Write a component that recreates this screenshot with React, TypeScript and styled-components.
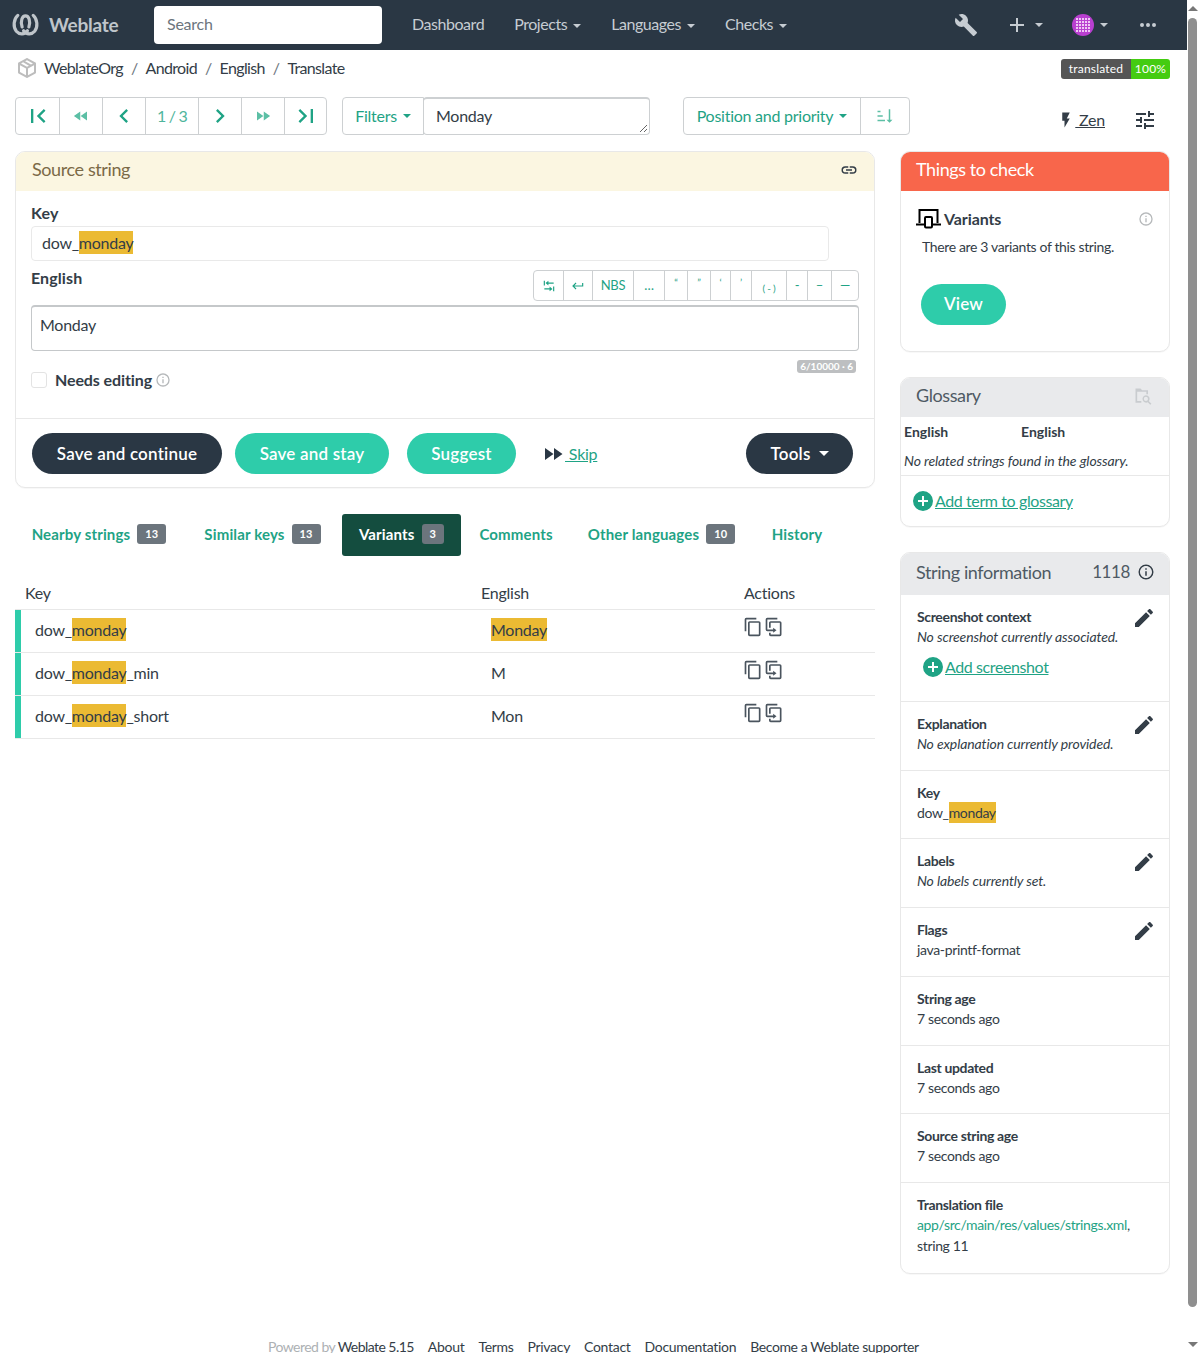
import React from 'react';
import styled, { createGlobalStyle } from 'styled-components';

const P = {
  first: 'M18.41,16.59L13.82,12L18.41,7.41L17,6L11,12L17,18L18.41,16.59M6,6H8V18H6V6Z',
  prev: 'M15.41,16.58L10.83,12L15.41,7.41L14,6L8,12L14,18L15.41,16.58Z',
  next: 'M8.59,16.58L13.17,12L8.59,7.41L10,6L16,12L10,18L8.59,16.58Z',
  last: 'M5.59,7.41L10.18,12L5.59,16.59L7,18L13,12L7,6L5.59,7.41M16,6H18V18H16V6Z',
  rewind: 'M11.5,12L20,18V6M11,18V6L2.5,12L11,18Z',
  forward: 'M13,6V18L21.5,12M4,18L12.5,12L4,6V18Z',
  wrench:
    'M22.7,19L13.6,9.9C14.5,7.6 14,4.9 12.1,3C10.1,1 7.1,0.6 4.7,1.7L9,6L6,9L1.6,4.7C0.4,7.1 0.9,10.1 2.9,12.1C4.8,14 7.5,14.5 9.8,13.6L18.9,22.7C19.3,23.1 19.9,23.1 20.3,22.7L22.6,20.4C23.1,20 23.1,19.3 22.7,19Z',
  plus: 'M19,13H13V19H11V13H5V11H11V5H13V11H19V13Z',
  dots: 'M16,12A2,2 0 0,1 18,10A2,2 0 0,1 20,12A2,2 0 0,1 18,14A2,2 0 0,1 16,12M10,12A2,2 0 0,1 12,10A2,2 0 0,1 14,12A2,2 0 0,1 12,14A2,2 0 0,1 10,12M4,12A2,2 0 0,1 6,10A2,2 0 0,1 8,12A2,2 0 0,1 6,14A2,2 0 0,1 4,12Z',
  flash: 'M7,2V13H10V22L17,10H13L17,2H7Z',
  tune: 'M3,17V19H9V17H3M3,5V7H13V5H3M13,21V19H21V17H13V15H11V21H13M7,9V11H3V13H7V15H9V9H7M21,13V11H11V13H21M15,9H17V7H21V5H17V3H15V9Z',
  sort: 'M19 17H22L18 21L14 17H17V3H19M2 17H12V19H2M6 5V7H2V5M2 11H9V13H2V11Z',
  link: 'M3.9,12C3.9,10.29 5.29,8.9 7,8.9H11V7H7A5,5 0 0,0 2,12A5,5 0 0,0 7,17H11V15.1H7C5.29,15.1 3.9,13.71 3.9,12M8,13H16V11H8V13M17,7H13V8.9H17C18.71,8.9 20.1,10.29 20.1,12C20.1,13.71 18.71,15.1 17,15.1H13V17H17A5,5 0 0,0 22,12A5,5 0 0,0 17,7Z',
  info: 'M11,9H13V7H11M12,20C7.59,20 4,16.41 4,12C4,7.59 7.59,4 12,4C16.41,4 20,7.59 20,12C20,16.41 16.41,20 12,20M12,2A10,10 0 0,0 2,12A10,10 0 0,0 12,22A10,10 0 0,0 22,12A10,10 0 0,0 12,2M11,17H13V11H11V17Z',
  pencil:
    'M20.71,7.04C21.1,6.65 21.1,6 20.71,5.63L18.37,3.29C18,2.9 17.35,2.9 16.96,3.29L15.12,5.12L18.87,8.87M3,17.25V21H6.75L17.81,9.93L14.06,6.18L3,17.25Z',
  plusCircle:
    'M17,13H13V17H11V13H7V11H11V7H13V11H17M12,2A10,10 0 0,0 2,12A10,10 0 0,0 12,22A10,10 0 0,0 22,12A10,10 0 0,0 12,2Z',
  copy: 'M19,21H8V7H19M19,5H8A2,2 0 0,0 6,7V21A2,2 0 0,0 8,23H19A2,2 0 0,0 21,21V7A2,2 0 0,0 19,5M16,1H4A2,2 0 0,0 2,3V17H4V3H16V1Z',
  duplicate:
    'M11,17H4A2,2 0 0,1 2,15V3A2,2 0 0,1 4,1H16V3H4V15H11V13L15,16L11,19V17M19,21V7H8V13H6V7A2,2 0 0,1 8,5H19A2,2 0 0,1 21,7V21A2,2 0 0,1 19,23H8A2,2 0 0,1 6,21V19H8V21H19Z',
  ret: 'M19,7V11H5.83L9.41,7.41L8,6L2,12L8,18L9.41,16.58L5.83,13H21V7H19Z',
  pack: 'M21,16.5C21,16.88 20.79,17.21 20.47,17.38L12.57,21.82C12.41,21.94 12.21,22 12,22C11.79,22 11.59,21.94 11.43,21.82L3.53,17.38C3.21,17.21 3,16.88 3,16.5V7.5C3,7.12 3.21,6.79 3.53,6.62L11.43,2.18C11.59,2.06 11.79,2 12,2C12.21,2 12.41,2.06 12.57,2.18L20.47,6.62C20.79,6.79 21,7.12 21,7.5V16.5M12,4.15L10.11,5.22L16,8.61L17.96,7.5L12,4.15M6.04,7.5L12,10.85L13.96,9.75L8.08,6.35L6.04,7.5M5,15.91L11,19.29V12.58L5,9.21V15.91M19,15.91V9.21L13,12.58V19.29L19,15.91Z',
};

const Global = createGlobalStyle`
  body {
    margin: 0;
    font-family: Lato, "Noto Sans", sans-serif;
    font-size: 16px;
    line-height: 1.25;
    letter-spacing: -0.25px;
    color: #333d47;
    background: #fff;
  }
  * { box-sizing: border-box; }
`;

const Shell = styled.div`
  padding-right: 13px;
`;

/* the window scrollbar in the reference */
const ScrollBar = styled.div`
  position: fixed;
  top: 0;
  right: 0;
  bottom: 0;
  width: 13px;
  background: #fff;
  display: flex;
  flex-direction: column;
  align-items: flex-start;
`;
const ScrollUp = styled.span`
  width: 0;
  height: 0;
  margin: 6px 0 7px 1px;
  border-bottom: 5px solid #777;
  border-left: 5px solid transparent;
  border-right: 5px solid transparent;
`;
const ScrollThumb = styled.span`
  width: 9px;
  height: 1289px;
  margin-left: 1px;
  background: #8f8f8f;
  border-radius: 5px;
`;
const ScrollDown = styled.span`
  width: 0;
  height: 0;
  margin: auto 0 6px 1px;
  border-top: 5px solid #777;
  border-left: 5px solid transparent;
  border-right: 5px solid transparent;
`;

const Svg = styled.svg<{ $size: number }>`
  width: ${(p) => p.$size}px;
  height: ${(p) => p.$size}px;
  flex: none;
  fill: currentColor;
`;

const Icon = ({ d, size = 24 }: { d: string; size?: number }) => (
  <Svg $size={size} viewBox="0 0 24 24">
    <path d={d} />
  </Svg>
);

const Caret = styled.span`
  display: inline-block;
  width: 0;
  height: 0;
  margin-left: 6px;
  vertical-align: 2px;
  border-top: 4px solid currentColor;
  border-left: 4px solid transparent;
  border-right: 4px solid transparent;
`;

/* navbar */
const Nav = styled.nav`
  height: 50px;
  background: #2a3744;
  display: flex;
  align-items: center;
  color: #c6ccd2;
`;
const Brand = styled.div`
  width: 154px;
  padding-left: 12px;
  padding-bottom: 1px;
  display: flex;
  align-items: center;
  gap: 10px;
  font-size: 19px;
  font-weight: 700;
  color: #bfc5ca;
`;
const LogoSvg = styled.svg`
  width: 27px;
  height: 24px;
  fill: none;
  stroke: #bfc5ca;
  stroke-width: 3.3;
  stroke-linecap: round;
`;
const Search = styled.div`
  width: 228px;
  height: 38px;
  background: #fff;
  border-radius: 4px;
  padding: 0 13px 2px;
  display: flex;
  align-items: center;
  color: #6c757d;
`;
const NavLinks = styled.div`
  display: flex;
  gap: 30px;
  margin-left: 30px;
  padding-bottom: 2px;
  flex: 1;
  letter-spacing: -0.45px;
`;
const NavLink = styled.span``;
const NavIcons = styled.div`
  display: flex;
  align-items: center;
  margin-right: 27px;
`;
const NavIcon = styled.span<{ $w: number }>`
  width: ${(p) => p.$w}px;
  display: flex;
  align-items: center;
`;
const Avatar = styled.svg`
  width: 22px;
  height: 22px;
  flex: none;
`;

/* breadcrumbs */
const Crumbs = styled.div`
  height: 47px;
  padding: 0 17px 0 15px;
  display: flex;
  align-items: flex-start;
  justify-content: space-between;
`;
const CrumbTrail = styled.div`
  display: flex;
  align-items: center;
  height: 36px;
  color: #333d47;
  letter-spacing: -0.65px;
`;
const PackIcon = styled.span`
  color: #bdbdbd;
  display: flex;
  margin-right: 5px;
`;
const Sep = styled.span`
  margin: 0 8px;
  color: #6c757d;
`;
const Badge = styled.div`
  margin-top: 9px;
  height: 20px;
  display: flex;
  font-size: 12px;
  line-height: 20px;
  color: #fff;
  border-radius: 3px;
  overflow: hidden;
  letter-spacing: 0.2px;
`;
const BadgeL = styled.span`
  width: 70px;
  background: #555;
  text-align: center;
`;
const BadgeR = styled.span`
  width: 39px;
  background: #4c1;
  text-align: center;
`;

/* toolbar */
const Toolbar = styled.div`
  height: 38px;
  margin: 0 17px 16px 15px;
  display: flex;
  align-items: stretch;
  color: #1fa385;
`;
const Group = styled.div`
  display: flex;
  border: 1px solid #cdd0d2;
  border-radius: 4px;
  overflow: hidden;
`;
const GroupBtn = styled.div<{ $w: number; $light?: boolean }>`
  width: ${(p) => p.$w}px;
  display: flex;
  align-items: center;
  justify-content: center;
  color: ${(p) => (p.$light ? '#5cbfa5' : '#1fa385')};
  & + & {
    border-left: 1px solid #cdd0d2;
  }
`;
const PageCount = styled.span`
  letter-spacing: -0.8px;
  color: #4fb59c;
`;
const FilterBtn = styled.div`
  margin-left: 15px;
  width: 82px;
  border: 1px solid #cdd0d2;
  border-radius: 4px 0 0 4px;
  display: flex;
  align-items: center;
  justify-content: center;
`;
const FilterInput = styled.div`
  position: relative;
  width: 227px;
  margin-left: -1px;
  border: 1px solid #cdd0d2;
  border-top-width: 2px;
  border-radius: 4px;
  padding: 0 0 2px 12px;
  display: flex;
  align-items: center;
  color: #333d47;
`;
const Resizer = styled.svg`
  position: absolute;
  right: 1px;
  bottom: 1px;
  width: 9px;
  height: 9px;
  stroke: #666;
  stroke-width: 1;
`;
const SortGroup = styled(Group)`
  margin-left: 33px;
`;
const ZenWrap = styled.div`
  margin: 0 13px 0 auto;
  display: flex;
  align-items: center;
  padding-top: 8px;
  color: #333d47;
`;
const ZenLink = styled.span`
  text-decoration: underline;
  margin-right: 28px;
`;

/* main */
const Main = styled.div`
  display: grid;
  grid-template-columns: 860px 270px;
  column-gap: 25px;
  padding: 0 17px 0 15px;
  align-items: start;
`;
const Column = styled.div``;
const Card = styled.section<{ $gap?: number }>`
  border: 1px solid #e8e8e8;
  border-radius: 10px;
  overflow: hidden;
  background: #fff;
  margin-bottom: ${(p) => p.$gap ?? 0}px;
  box-shadow: 0 1px 1px rgba(0, 0, 0, 0.03);
`;
const CardHead = styled.header<{ $bg: string; $color: string; $h?: number; $pl?: number }>`
  height: ${(p) => p.$h ?? 40}px;
  margin: -1px -1px 0;
  padding: 0 17px 3px ${(p) => p.$pl ?? 16}px;
  background: ${(p) => p.$bg};
  color: ${(p) => p.$color};
  font-size: 18px;
  letter-spacing: -0.4px;
  display: flex;
  align-items: center;
  justify-content: space-between;
`;
const HeadRight = styled.span`
  display: flex;
  align-items: center;
  gap: 7px;
  margin-right: -2px;
  color: #4f5a64;
  font-size: 17px;
`;
const HeadIcon = styled.span<{ $color?: string }>`
  display: flex;
  color: ${(p) => p.$color ?? '#333d47'};
`;

const SourceBody = styled.div`
  padding: 14px 15px 0;
  height: 228px;
  border-bottom: 1px solid #e8e8e8;
`;
const Label = styled.div`
  font-weight: 700;
  font-size: 16px;
  line-height: 16px;
  letter-spacing: 0.1px;
  margin-bottom: 5px;
`;
const KeyBox = styled.div`
  width: 798px;
  height: 35px;
  border: 1px solid #e9e9e9;
  border-radius: 4px;
  padding: 0 10px 1px;
  display: flex;
  align-items: center;
`;
const Mark = styled.mark`
  background: #ebba33;
  color: inherit;
  padding: 2px 0;
`;
const EditorHead = styled.div`
  display: flex;
  justify-content: space-between;
  align-items: flex-start;
  margin-top: 9px;
`;
const EditGroup = styled(Group)`
  height: 31px;
  font-size: 13px;
`;
const EditBtn = styled(GroupBtn)`
  font-size: 13px;
`;
const SmallGlyph = styled.span<{ $up?: boolean }>`
  font-size: 10px;
  transform: translateY(${(p) => (p.$up ? -3 : 3)}px);
`;
const TextArea = styled.div`
  margin-top: 4px;
  height: 46px;
  border: 1px solid #c5c8ca;
  border-top-width: 2px;
  border-radius: 4px;
  padding: 8px;
`;
const CounterRow = styled.div`
  display: flex;
  justify-content: flex-end;
  margin: 9px 3px 0 0;
`;
const Counter = styled.span`
  background: #bdbfc1;
  color: #fff;
  font-size: 10px;
  font-weight: 700;
  line-height: 13px;
  letter-spacing: 0;
  padding: 0 3px;
  border-radius: 3px;
`;
const CheckRow = styled.div`
  display: flex;
  align-items: center;
  margin-top: -3px;
  height: 20px;
`;
const Check = styled.span`
  width: 16px;
  height: 16px;
  border: 1px solid #e3e3e3;
  border-radius: 3px;
  margin-right: 8px;
`;
const CheckLabel = styled.span`
  font-weight: 700;
  font-size: 16px;
  letter-spacing: -0.1px;
  margin-right: 3px;
`;
const GrayIcon = styled.span`
  display: flex;
  color: #b5b8ba;
`;
const Actions = styled.div`
  height: 68px;
  padding: 14px 21px 13px 16px;
  display: flex;
  align-items: flex-start;
`;
const Pill = styled.span<{ $bg: string; $w: number; $ml?: number }>`
  width: ${(p) => p.$w}px;
  height: 41px;
  margin-left: ${(p) => p.$ml ?? 0}px;
  border-radius: 21px;
  background: ${(p) => p.$bg};
  color: #fff;
  font-size: 17px;
  font-weight: 600;
  letter-spacing: 0.2px;
  display: flex;
  align-items: center;
  justify-content: center;
`;
const PillCaret = styled(Caret)`
  margin-left: 8px;
  vertical-align: 0;
  border-top-width: 5px;
  border-left-width: 5px;
  border-right-width: 5px;
`;
const Skip = styled.span`
  margin-left: 25px;
  height: 41px;
  display: flex;
  align-items: center;
  color: #1fa385;
`;
const SkipText = styled.span`
  text-decoration: underline;
`;
const SkipIcon = styled.span`
  display: flex;
  color: #2a3744;
`;
const Grow = styled.span`
  flex: 1;
`;

/* tabs */
const Tabs = styled.div`
  margin-top: 26px;
  height: 42px;
  display: flex;
  align-items: stretch;
  font-size: 15px;
  font-weight: 700;
  letter-spacing: 0.15px;
  color: #1fa385;
`;
const Tab = styled.div<{ $active?: boolean; $w: number }>`
  width: ${(p) => p.$w}px;
  padding-bottom: 2px;
  display: flex;
  align-items: center;
  justify-content: center;
  gap: 7px;
  border-radius: 3px;
  background: ${(p) => (p.$active ? '#144d3f' : 'transparent')};
  color: ${(p) => (p.$active ? '#fff' : '#1fa385')};
`;
const TabCount = styled.span`
  background: #6c757d;
  color: #fff;
  font-size: 11px;
  font-weight: 700;
  line-height: 20px;
  padding: 0 8px;
  border-radius: 3px;
`;

/* table */
const Table = styled.table`
  width: 860px;
  margin-top: 24px;
  border-collapse: collapse;
  table-layout: fixed;
`;
const Th = styled.th`
  text-align: left;
  font-weight: 400;
  height: 29px;
  padding: 0 10px;
  vertical-align: top;
  line-height: 25px;
  border-bottom: 1px solid #e8e8e8;
`;
const Td = styled.td<{ $pad: number; $bar?: boolean }>`
  height: 43px;
  padding: 0 0 2px ${(p) => p.$pad}px;
  border-bottom: 1px solid #e8e8e8;
  box-shadow: ${(p) => (p.$bar ? 'inset 6px 0 0 #2eccaa' : 'none')};
`;
const CopyIcons = styled.span`
  display: flex;
  gap: 1px;
  margin-top: -5px;
  color: #4a545e;
`;

/* sidebar */
const CheckBody = styled.div`
  padding: 17px 15px 0;
  height: 160px;
`;
const CheckTitle = styled.div`
  display: flex;
  align-items: center;
  font-size: 16px;
  font-weight: 700;
  letter-spacing: -0.1px;
`;
const DeviceSvg = styled.svg`
  width: 25px;
  height: 21px;
  margin-right: 3px;
  fill: none;
  stroke: #000;
  stroke-width: 2;
`;
const CheckText = styled.div`
  margin: 9px 0 0 6px;
  font-size: 14px;
  letter-spacing: -0.36px;
`;
const ViewBtn = styled(Pill)`
  margin: 28px 0 0 5px;
`;
const TermHead = styled.div`
  display: grid;
  grid-template-columns: 117px 1fr;
  padding: 6px 3px 0;
  font-size: 14px;
  font-weight: 700;
  letter-spacing: 0;
`;
const NoTerms = styled.div`
  padding: 11px 3px 0;
  height: 35.5px;
  font-size: 14px;
  font-style: italic;
  letter-spacing: -0.1px;
  border-bottom: 1px solid #e8e8e8;
`;
const AddRow = styled.div`
  display: flex;
  align-items: center;
  color: #1fa385;
`;
const AddText = styled.span`
  text-decoration: underline;
  letter-spacing: -0.4px;
`;
const AddPad = styled.div`
  height: 50px;
  padding: 0 10px;
  display: flex;
  align-items: center;
`;
const InfoItem = styled.div`
  position: relative;
  padding: 12px 15px 15.75px 16px;
  font-size: 14px;
  line-height: 20px;
  letter-spacing: -0.35px;
  & + & {
    border-top: 1px solid #e8e8e8;
  }
`;
const InfoTitle = styled.div`
  font-weight: 700;
  letter-spacing: -0.35px;
`;
const Note = styled.div`
  font-style: italic;
  letter-spacing: -0.12px;
`;
const EditIcon = styled.span`
  position: absolute;
  top: 11px;
  right: 13px;
  display: flex;
  color: #333d47;
`;
const ShotAdd = styled.div`
  margin: 8px 0 6px 4px;
  font-size: 16px;
`;
const FileLink = styled.span`
  color: #1fa385;
`;
const LastLine = styled.div`
  margin: 1px 0 1px;
`;
const Footer = styled.footer`
  margin-top: 64px;
  height: 50px;
  padding-left: 268px;
  display: flex;
  gap: 14px;
  font-size: 14px;
  letter-spacing: -0.3px;
  color: #333d47;
`;
const FooterFirst = styled.span`
  letter-spacing: -0.55px;
`;
const FooterLast = styled.span`
  letter-spacing: -0.4px;
`;
const Powered = styled.span`
  color: #adb1b4;
`;

const rows = [
  { suffix: '', en: 'Monday', hl: true },
  { suffix: '_min', en: 'M', hl: false },
  { suffix: '_short', en: 'Mon', hl: false },
];

const dotsGrid = [4, 7, 10, 13, 16];

const App = () => {
  return (
    <Shell>
      <Global />
      <ScrollBar>
        <ScrollUp />
        <ScrollThumb />
        <ScrollDown />
      </ScrollBar>
      <Nav>
        <Brand>
          <LogoSvg viewBox="0 0 28 24">
            <path d="M6 2C1.5 6 1 14 4.5 18.5C8 22.5 13 22 16 18" />
            <path d="M22 2C26.5 6 27 14 23.5 18.5C20 22.5 15 22 12 18" />
            <path d="M10.5 14C8.5 8 10.5 2.5 14 2.5C17.5 2.5 19.5 8 17.5 14" />
          </LogoSvg>
          Weblate
        </Brand>
        <Search>Search</Search>
        <NavLinks>
          <NavLink>Dashboard</NavLink>
          <NavLink>
            Projects
            <Caret />
          </NavLink>
          <NavLink>
            Languages
            <Caret />
          </NavLink>
          <NavLink>
            Checks
            <Caret />
          </NavLink>
        </NavLinks>
        <NavIcons>
          <NavIcon $w={51}>
            <Icon d={P.wrench} />
          </NavIcon>
          <NavIcon $w={67}>
            <Icon d={P.plus} />
            <Caret />
          </NavIcon>
          <NavIcon $w={64}>
            <Avatar viewBox="0 0 22 22">
              <circle cx="11" cy="11" r="11" fill="#b93fd0" />
              {dotsGrid.map((y) =>
                dotsGrid.map((x) => (
                  <rect key={`${x}-${y}`} x={x} y={y} width="2" height="2" fill="#efc8f5" />
                )),
              )}
            </Avatar>
            <Caret />
          </NavIcon>
          <Icon d={P.dots} />
        </NavIcons>
      </Nav>

      <Crumbs>
        <CrumbTrail>
          <PackIcon>
            <Icon d={P.pack} />
          </PackIcon>
          WeblateOrg
          <Sep>/</Sep>
          Android
          <Sep>/</Sep>
          English
          <Sep>/</Sep>
          Translate
        </CrumbTrail>
        <Badge>
          <BadgeL>translated</BadgeL>
          <BadgeR>100%</BadgeR>
        </Badge>
      </Crumbs>

      <Toolbar>
        <Group>
          <GroupBtn $w={43}>
            <Icon d={P.first} size={28} />
          </GroupBtn>
          <GroupBtn $w={43} $light>
            <Icon d={P.rewind} size={18} />
          </GroupBtn>
          <GroupBtn $w={43}>
            <Icon d={P.prev} size={28} />
          </GroupBtn>
          <GroupBtn $w={53}>
            <PageCount>1 / 3</PageCount>
          </GroupBtn>
          <GroupBtn $w={43}>
            <Icon d={P.next} size={28} />
          </GroupBtn>
          <GroupBtn $w={43} $light>
            <Icon d={P.forward} size={18} />
          </GroupBtn>
          <GroupBtn $w={42}>
            <Icon d={P.last} size={28} />
          </GroupBtn>
        </Group>
        <FilterBtn>
          Filters
          <Caret />
        </FilterBtn>
        <FilterInput>
          Monday
          <Resizer viewBox="0 0 9 9">
            <path d="M1 8L8 1M5 8L8 5" />
          </Resizer>
        </FilterInput>
        <SortGroup>
          <GroupBtn $w={176}>
            Position and priority
            <Caret />
          </GroupBtn>
          <GroupBtn $w={49} $light>
            <Icon d={P.sort} size={18} />
          </GroupBtn>
        </SortGroup>
        <ZenWrap>
          <Icon d={P.flash} size={18} />
          <ZenLink>&nbsp;Zen</ZenLink>
          <Icon d={P.tune} />
        </ZenWrap>
      </Toolbar>

      <Main>
        <Column>
          <Card>
            <CardHead $bg="#fbf6e1" $color="#7b6a47" $pl={17}>
              Source string
              <HeadIcon>
                <Icon d={P.link} size={18} />
              </HeadIcon>
            </CardHead>
            <SourceBody>
              <Label>Key</Label>
              <KeyBox>
                <span>
                  dow_<Mark>monday</Mark>
                </span>
              </KeyBox>
              <EditorHead>
                <Label>English</Label>
                <EditGroup>
                  <EditBtn $w={29}>
                    <Svg $size={14} viewBox="0 0 24 24">
                      <path d="M3 3h2v8H3zM21 13h-2v8h2zM6 7l5-4v3h9v2h-9v3zM18 17l-5 4v-3H4v-2h9v-3z" />
                    </Svg>
                  </EditBtn>
                  <EditBtn $w={29}>
                    <Icon d={P.ret} size={14} />
                  </EditBtn>
                  <EditBtn $w={41}>NBS</EditBtn>
                  <EditBtn $w={31}>…</EditBtn>
                  <EditBtn $w={23}>
                    <SmallGlyph $up>“</SmallGlyph>
                  </EditBtn>
                  <EditBtn $w={23}>
                    <SmallGlyph $up>”</SmallGlyph>
                  </EditBtn>
                  <EditBtn $w={20}>
                    <SmallGlyph $up>‘</SmallGlyph>
                  </EditBtn>
                  <EditBtn $w={21}>
                    <SmallGlyph $up>’</SmallGlyph>
                  </EditBtn>
                  <EditBtn $w={35}>
                    <SmallGlyph>( - )</SmallGlyph>
                  </EditBtn>
                  <EditBtn $w={21}>-</EditBtn>
                  <EditBtn $w={24}>–</EditBtn>
                  <EditBtn $w={27}>—</EditBtn>
                </EditGroup>
              </EditorHead>
              <TextArea>Monday</TextArea>
              <CounterRow>
                <Counter>6/10000 · 6</Counter>
              </CounterRow>
              <CheckRow>
                <Check />
                <CheckLabel>Needs editing</CheckLabel>
                <GrayIcon>
                  <Icon d={P.info} size={16} />
                </GrayIcon>
              </CheckRow>
            </SourceBody>
            <Actions>
              <Pill $bg="#2a3744" $w={190}>
                Save and continue
              </Pill>
              <Pill $bg="#2eccaa" $w={154} $ml={13}>
                Save and stay
              </Pill>
              <Pill $bg="#2eccaa" $w={109} $ml={18}>
                Suggest
              </Pill>
              <Skip>
                <SkipIcon>
                  <Icon d={P.forward} />
                </SkipIcon>
                <SkipText>&nbsp;Skip</SkipText>
              </Skip>
              <Grow />
              <Pill $bg="#2a3744" $w={107}>
                Tools
                <PillCaret />
              </Pill>
            </Actions>
          </Card>

          <Tabs>
            <Tab $w={168}>
              Nearby strings <TabCount>13</TabCount>
            </Tab>
            <Tab $w={159}>
              Similar keys <TabCount>13</TabCount>
            </Tab>
            <Tab $w={119} $active>
              Variants <TabCount>3</TabCount>
            </Tab>
            <Tab $w={110}>Comments</Tab>
            <Tab $w={181}>
              Other languages <TabCount>10</TabCount>
            </Tab>
            <Tab $w={90}>History</Tab>
          </Tabs>

          <Table>
            <colgroup>
              <col width="456" />
              <col width="263" />
              <col width="141" />
            </colgroup>
            <thead>
              <tr>
                <Th>Key</Th>
                <Th>English</Th>
                <Th>Actions</Th>
              </tr>
            </thead>
            <tbody>
              {rows.map((r) => (
                <tr key={r.suffix}>
                  <Td $pad={20} $bar>
                    dow_<Mark>monday</Mark>
                    {r.suffix}
                  </Td>
                  <Td $pad={20}>{r.hl ? <Mark>{r.en}</Mark> : r.en}</Td>
                  <Td $pad={9}>
                    <CopyIcons>
                      <Icon d={P.copy} size={20} />
                      <Icon d={P.duplicate} size={20} />
                    </CopyIcons>
                  </Td>
                </tr>
              ))}
            </tbody>
          </Table>
        </Column>

        <Column>
          <Card $gap={25}>
            <CardHead $bg="#f8664b" $color="#fff">
              Things to check
            </CardHead>
            <CheckBody>
              <CheckTitle>
                <DeviceSvg viewBox="0 0 25 21">
                  <path d="M3.5 15V2h18v13" />
                  <path d="M0 16.5h9M16 16.5h9" />
                  <rect x="9" y="9" width="7" height="10.5" rx="1" />
                </DeviceSvg>
                Variants
                <Grow />
                <GrayIcon>
                  <Icon d={P.info} size={16} />
                </GrayIcon>
              </CheckTitle>
              <CheckText>There are 3 variants of this string.</CheckText>
              <ViewBtn $bg="#2eccaa" $w={85}>
                View
              </ViewBtn>
            </CheckBody>
          </Card>

          <Card $gap={25}>
            <CardHead $bg="#e9eaec" $color="#4f5a64">
              Glossary
              <HeadIcon $color="#c9cccf">
                <Svg $size={20} viewBox="0 0 24 24">
                  <path d="M3 3h6l2 2h7v5h-2V7H5v11h5v2H3zM15.5 11a4.5 4.5 0 0 1 3.6 7.2l3 3-1.4 1.4-3-3A4.5 4.5 0 1 1 15.5 11zm0 2a2.5 2.5 0 1 0 0 5 2.5 2.5 0 0 0 0-5z" />
                </Svg>
              </HeadIcon>
            </CardHead>
            <TermHead>
              <span>English</span>
              <span>English</span>
            </TermHead>
            <NoTerms>No related strings found in the glossary.</NoTerms>
            <AddPad>
              <AddRow>
                <Icon d={P.plusCircle} />
                <AddText>Add term to glossary</AddText>
              </AddRow>
            </AddPad>
          </Card>

          <Card>
            <CardHead $bg="#e9eaec" $color="#4f5a64" $h={43}>
              String information
              <HeadRight>
                1118
                <HeadIcon>
                  <Icon d={P.info} size={18} />
                </HeadIcon>
              </HeadRight>
            </CardHead>
            <InfoItem>
              <InfoTitle>Screenshot context</InfoTitle>
              <Note>No screenshot currently associated.</Note>
              <ShotAdd>
                <AddRow>
                  <Icon d={P.plusCircle} />
                  <AddText>Add screenshot</AddText>
                </AddRow>
              </ShotAdd>
              <EditIcon>
                <Icon d={P.pencil} />
              </EditIcon>
            </InfoItem>
            <InfoItem>
              <InfoTitle>Explanation</InfoTitle>
              <Note>No explanation currently provided.</Note>
              <EditIcon>
                <Icon d={P.pencil} />
              </EditIcon>
            </InfoItem>
            <InfoItem>
              <InfoTitle>Key</InfoTitle>
              <div>
                dow_<Mark>monday</Mark>
              </div>
            </InfoItem>
            <InfoItem>
              <InfoTitle>Labels</InfoTitle>
              <Note>No labels currently set.</Note>
              <EditIcon>
                <Icon d={P.pencil} />
              </EditIcon>
            </InfoItem>
            <InfoItem>
              <InfoTitle>Flags</InfoTitle>
              <div>java-printf-format</div>
              <EditIcon>
                <Icon d={P.pencil} />
              </EditIcon>
            </InfoItem>
            <InfoItem>
              <InfoTitle>String age</InfoTitle>
              <div>7 seconds ago</div>
            </InfoItem>
            <InfoItem>
              <InfoTitle>Last updated</InfoTitle>
              <div>7 seconds ago</div>
            </InfoItem>
            <InfoItem>
              <InfoTitle>Source string age</InfoTitle>
              <div>7 seconds ago</div>
            </InfoItem>
            <InfoItem>
              <InfoTitle>Translation file</InfoTitle>
              <div>
                <FileLink>app/src/main/res/values/strings.xml</FileLink>,
              </div>
              <LastLine>string 11</LastLine>
            </InfoItem>
          </Card>
        </Column>
      </Main>

      <Footer>
        <FooterFirst>
          <Powered>Powered by</Powered> Weblate 5.15
        </FooterFirst>
        <span>About</span>
        <span>Terms</span>
        <span>Privacy</span>
        <span>Contact</span>
        <span>Documentation</span>
        <FooterLast>Become a Weblate supporter</FooterLast>
      </Footer>
    </Shell>
  );
};

export default App;
